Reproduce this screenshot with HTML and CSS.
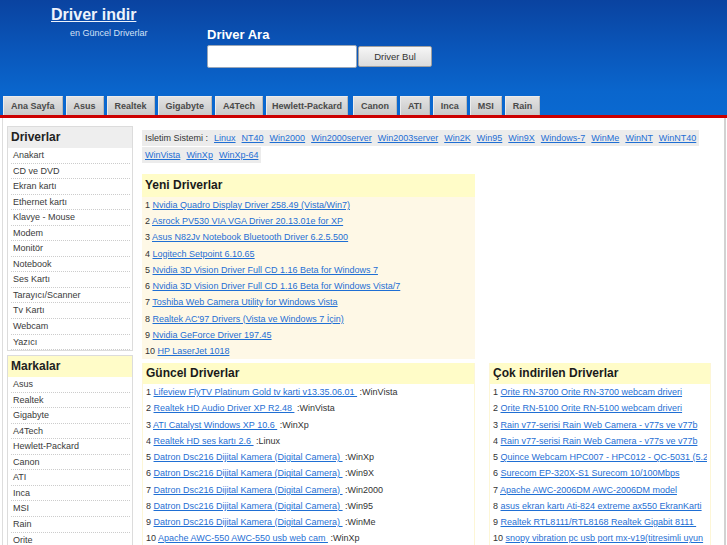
FILE: index.html
```html
<!DOCTYPE html>
<html lang="tr">
<head>
<meta charset="utf-8">
<title>Driver indir</title>
<link rel="stylesheet" href="styles.css">
</head>
<body>
<div class="page">
  <header class="top">
    <div class="brand-row">
      <div class="brand">
        <a class="logo" href="#">Driver indir</a>
        <div class="tagline">en Güncel Driverlar</div>
      </div>
      <form class="search">
        <div class="search-title">Driver Ara</div>
        <div class="search-row">
          <input class="search-input" type="text">
          <button class="search-btn" type="button">Driver Bul</button>
        </div>
      </form>
    </div>
    <nav class="tabs">
      <a class="tab" href="#">Ana Sayfa</a>
      <a class="tab" href="#">Asus</a>
      <a class="tab" href="#">Realtek</a>
      <a class="tab" href="#">Gigabyte</a>
      <a class="tab" href="#">A4Tech</a>
      <a class="tab tab-hp" href="#">Hewlett-Packard</a>
      <a class="tab" href="#">Canon</a>
      <a class="tab" href="#">ATI</a>
      <a class="tab" href="#">Inca</a>
      <a class="tab" href="#">MSI</a>
      <a class="tab" href="#">Rain</a>
    </nav>
  </header>

  <div class="content">
    <aside class="sidebar">
      <div class="box">
        <div class="box-title">Driverlar</div>
        <ul class="menu">
          <li><a href="#">Anakart</a></li>
          <li><a href="#">CD ve DVD</a></li>
          <li><a href="#">Ekran kartı</a></li>
          <li><a href="#">Ethernet kartı</a></li>
          <li><a href="#">Klavye - Mouse</a></li>
          <li><a href="#">Modem</a></li>
          <li><a href="#">Monitör</a></li>
          <li><a href="#">Notebook</a></li>
          <li><a href="#">Ses Kartı</a></li>
          <li><a href="#">Tarayıcı/Scanner</a></li>
          <li><a href="#">Tv Kartı</a></li>
          <li><a href="#">Webcam</a></li>
          <li><a href="#">Yazıcı</a></li>
        </ul>
      </div>
      <div class="box">
        <div class="box-title yellow">Markalar</div>
        <ul class="menu">
          <li><a href="#">Asus</a></li>
          <li><a href="#">Realtek</a></li>
          <li><a href="#">Gigabyte</a></li>
          <li><a href="#">A4Tech</a></li>
          <li><a href="#">Hewlett-Packard</a></li>
          <li><a href="#">Canon</a></li>
          <li><a href="#">ATI</a></li>
          <li><a href="#">Inca</a></li>
          <li><a href="#">MSI</a></li>
          <li><a href="#">Rain</a></li>
          <li><a href="#">Orite</a></li>
        </ul>
      </div>
    </aside>

    <main class="main">
      <div class="os"><span class="os-list"><span class="os-label">Isletim Sistemi :</span> <a href="#">Linux</a> <a href="#">NT40</a> <a href="#">Win2000</a> <a href="#">Win2000server</a> <a href="#">Win2003server</a> <a href="#">Win2K</a> <a href="#">Win95</a> <a href="#">Win9X</a> <a href="#">Windows-7</a> <a href="#">WinMe</a> <a href="#">WinNT</a> <a href="#">WinNT40</a> <a href="#">WinVista</a> <a href="#">WinXp</a> <a href="#">WinXp-64</a></span></div>

      <div class="grid">
        <section class="panel panel-new">
          <h2 class="panel-title tall">Yeni Driverlar</h2>
          <ol class="list">
            <li>1 <a href="#">Nvidia Quadro Display Driver 258.49 (Vista/Win7)</a></li>
            <li>2 <a href="#">Asrock PV530 VIA VGA Driver 20.13.01e for XP</a></li>
            <li>3 <a href="#">Asus N82Jv Notebook Bluetooth Driver 6.2.5.500</a></li>
            <li>4 <a href="#">Logitech Setpoint 6.10.65</a></li>
            <li>5 <a href="#">Nvidia 3D Vision Driver Full CD 1.16 Beta for Windows 7</a></li>
            <li>6 <a href="#">Nvidia 3D Vision Driver Full CD 1.16 Beta for Windows Vista/7</a></li>
            <li>7 <a href="#">Toshiba Web Camera Utility for Windows Vista</a></li>
            <li>8 <a href="#">Realtek AC'97 Drivers (Vista ve Windows 7 İçin)</a></li>
            <li>9 <a href="#">Nvidia GeForce Driver 197.45</a></li>
            <li>10 <a href="#">HP LaserJet 1018</a></li>
          </ol>
        </section>
        <div class="spacer"></div>

        <section class="panel">
          <h2 class="panel-title">Güncel Driverlar</h2>
          <ol class="list">
            <li>1 <a href="#">Lifeview FlyTV Platinum Gold tv karti v13.35.06.01&nbsp;</a> :WinVista</li>
            <li>2 <a href="#">Realtek HD Audio Driver XP R2.48&nbsp;</a> :WinVista</li>
            <li>3 <a href="#">ATI Catalyst Windows XP 10.6&nbsp;</a> :WinXp</li>
            <li>4 <a href="#">Realtek HD ses kartı 2.6&nbsp;</a> :Linux</li>
            <li>5 <a href="#">Datron Dsc216 Dijital Kamera (Digital Camera)&nbsp;</a> :WinXp</li>
            <li>6 <a href="#">Datron Dsc216 Dijital Kamera (Digital Camera)&nbsp;</a> :Win9X</li>
            <li>7 <a href="#">Datron Dsc216 Dijital Kamera (Digital Camera)&nbsp;</a> :Win2000</li>
            <li>8 <a href="#">Datron Dsc216 Dijital Kamera (Digital Camera)&nbsp;</a> :Win95</li>
            <li>9 <a href="#">Datron Dsc216 Dijital Kamera (Digital Camera)&nbsp;</a> :WinMe</li>
            <li>10 <a href="#">Apache AWC-550 AWC-550 usb web cam&nbsp;</a> :WinXp</li>
          </ol>
        </section>

        <section class="panel">
          <h2 class="panel-title">Çok indirilen Driverlar</h2>
          <ol class="list">
            <li>1 <a href="#">Orite RN-3700 Orite RN-3700 webcam driveri</a></li>
            <li>2 <a href="#">Orite RN-5100 Orite RN-5100 webcam driveri</a></li>
            <li>3 <a href="#">Rain v77-serisi Rain Web Camera - v77s ve v77b</a></li>
            <li>4 <a href="#">Rain v77-serisi Rain Web Camera - v77s ve v77b</a></li>
            <li>5 <a href="#">Quince Webcam HPC007 - HPC012 - QC-5031 (5.2</a></li>
            <li>6 <a href="#">Surecom EP-320X-S1 Surecom 10/100Mbps</a></li>
            <li>7 <a href="#">Apache AWC-2006DM AWC-2006DM model</a></li>
            <li>8 <a href="#">asus ekran kartı Ati-824 extreme ax550 EkranKarti</a></li>
            <li>9 <a href="#">Realtek RTL8111/RTL8168 Realtek Gigabit 8111&nbsp;</a></li>
            <li>10 <a href="#">snopy vibration pc usb port mx-v19(titresimli uyun</a></li>
          </ol>
        </section>
      </div>
    </main>
  </div>
</div>
</body>
</html>
```

FILE: styles.css
```css
html, body {
  margin: 0;
  padding: 0;
  overflow: hidden;
  background: #ffffff;
  font-family: "Liberation Sans", Arial, sans-serif;
  color: #333333;
}

.page {
  width: 727px;
}

/* ---------- header ---------- */
.top {
  background: linear-gradient(180deg, #0a43a0 0%, #0a57bb 45%, #0a66cd 80%, #0a69d1 100%);
  border-bottom: 3px solid #cc0000;
}

.brand-row {
  display: flex;
  height: 96px;
  padding-left: 51px;
}

.brand {
  width: 156px;
  padding-top: 6px;
}

.logo {
  display: block;
  font-size: 16px;
  line-height: 18px;
  font-weight: bold;
  color: #eef3fb;
  text-decoration: underline;
}

.tagline {
  margin: 3px 0 0 19px;
  font-size: 9px;
  line-height: 12px;
  color: #d3e2f6;
}

.search {
  margin: 0;
  padding-top: 27px;
}

.search-title {
  font-size: 13px;
  line-height: 16px;
  font-weight: bold;
  color: #ffffff;
  margin-bottom: 2px;
}

.search-row {
  display: flex;
  align-items: center;
  gap: 1px;
}

.search-input {
  box-sizing: border-box;
  width: 150px;
  height: 23px;
  margin: 0;
  border: 1px solid #9aa7b8;
  border-radius: 2px;
  background: #ffffff;
}

.search-btn {
  box-sizing: border-box;
  width: 74px;
  height: 21px;
  margin: 0;
  padding: 0;
  border: 1px solid #a0a0a0;
  border-radius: 2px;
  background: linear-gradient(180deg, #f6f6f6, #dcdcdc);
  font-family: "Liberation Sans", Arial, sans-serif;
  font-size: 9.5px;
  color: #333333;
}

.tabs {
  display: flex;
  height: 19px;
  padding-left: 3px;
  gap: 3px;
}

.tab {
  box-sizing: border-box;
  height: 19px;
  padding: 0 7px;
  border: 1px solid #ececec;
  border-bottom: none;
  border-right-color: #b8b8b8;
  background: linear-gradient(180deg, #e2e2e2, #c9c9c9);
  font-size: 9px;
  line-height: 18px;
  font-weight: bold;
  color: #4a4a4a;
  text-decoration: none;
  white-space: nowrap;
}

.tab-hp {
  padding: 0 5px;
  margin-right: 2px;
}

/* ---------- content ---------- */
.content {
  display: flex;
  margin: 0 1px 0 2px;
  border-left: 1px solid #dddddd;
  border-right: 2px solid #d2d2d2;
  min-height: 440px;
}

.sidebar {
  width: 126px;
  margin: 8px 0 0 4px;
  flex: none;
}

.box {
  border: 1px solid #dcdcdc;
  margin-bottom: 4px;
}

.box-title {
  margin: 0;
  padding-left: 3px;
  height: 21px;
  line-height: 21px;
  font-size: 12px;
  font-weight: bold;
  color: #222222;
  background: #eeeeee;
}

.box-title.yellow {
  background: #fffcc8;
}

.menu {
  list-style: none;
  margin: 0;
  padding: 0 2px 0 3px;
}

.menu li {
  height: 14.55px;
  line-height: 14.55px;
  border-bottom: 1px dotted #cccccc;
  padding-left: 2px;
  font-size: 9px;
}

.menu a {
  color: #3a3a3a;
  text-decoration: none;
}

.main {
  width: 570px;
  margin-left: 9px;
  padding-top: 12px;
  flex: none;
}

.os {
  font-size: 9px;
  line-height: 17px;
}

.os-list {
  background: #ececec;
  padding: 3px;
  -webkit-box-decoration-break: clone;
  box-decoration-break: clone;
  word-spacing: 3.5px;
}

.os-label {
  word-spacing: normal;
  color: #333333;
}

.os a {
  color: #1f6fd4;
  text-decoration: underline;
}

.grid {
  display: grid;
  grid-template-columns: 333px 222px;
  column-gap: 14px;
  row-gap: 4px;
  margin-top: 10px;
  align-items: start;
}

.panel {
  border: 1px solid #fdf6d6;
  border-top: none;
  overflow: hidden;
}

.panel-new {
  background: #fef8e6;
  border: none;
}

.panel-title {
  margin: 0;
  padding-left: 3px;
  height: 21px;
  line-height: 21px;
  font-size: 12px;
  font-weight: bold;
  color: #1a1a1a;
  background: #fffcc8;
}

.panel-title.tall {
  height: 23px;
  line-height: 23px;
}

.list {
  list-style: none;
  margin: 0;
  padding: 0 3px;
}

.list li {
  height: 16.22px;
  line-height: 16.22px;
  font-size: 9px;
  color: #333333;
  white-space: nowrap;
  overflow: hidden;
}

.list a {
  color: #1f6fd4;
  text-decoration: underline;
}
```
